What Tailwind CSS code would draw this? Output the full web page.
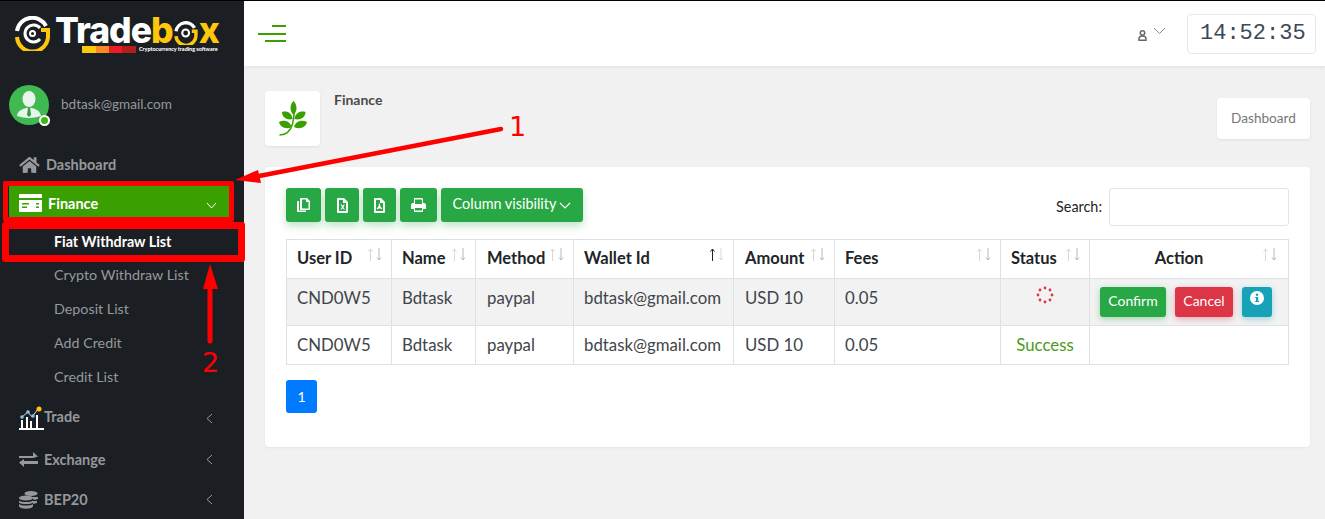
<!DOCTYPE html>
<html lang="en">
<head>
  <meta charset="UTF-8">
  <title>Tradebox - Fiat Withdraw List</title>
  <script src="https://cdn.jsdelivr.net/npm/@tailwindcss/browser@4"></script>
</head>
<body class="relative h-[519px] w-[1325px] overflow-hidden bg-[#f1f1f1] font-['Lato',sans-serif] text-[#212529]">
  <div class="flex h-[519px]">
    <!-- Sidebar -->
    <aside class="h-[519px] w-[244px] shrink-0 overflow-hidden border-t border-black bg-[#1b1f23] text-[#96989b]">
      <!-- Logo -->
      <div class="flex h-[64px] items-start pl-[15px] pt-[14px]">
        <svg class="mt-[1px] shrink-0" width="35" height="35" viewBox="0 0 35 35" fill="none">
          <path d="M2 15 A15.500 15.500 0 0 1 31 10" stroke="#fff" stroke-width="4"/>
          <path d="M2 21 A15.500 15.500 0 0 0 33 19 V14 H26" stroke="#fdc70c" stroke-width="4"/>
          <path d="M25 12 A8.500 8.500 0 1 0 25 23" stroke="#fff" stroke-width="3"/>
          <circle cx="17.500" cy="17.500" r="2.500" stroke="#fff" stroke-width="2"/>
        </svg>
        <div class="ml-[5px] flex flex-col">
          <div class="flex h-[31px] items-center font-['Inter',sans-serif] text-[35.500px] leading-[31px] font-extrabold tracking-[-1px] text-white">Trade<span class="text-[#fdc70c]">b</span><svg class="mx-[1px] mt-[5px]" width="24" height="24" viewBox="0 0 35 35" fill="none"><path d="M3 15 A14.500 14.500 0 0 1 30 10" stroke="#fff" stroke-width="5"/><path d="M3 22 A14.500 14.500 0 0 0 32 20 V15 H26" stroke="#fdc70c" stroke-width="5"/><circle cx="17" cy="17.500" r="5" stroke="#fff" stroke-width="3"/></svg><span class="text-[#fdc70c]">x</span></div>
          <div class="ml-[27px] flex items-center gap-[3px]">
            <div class="flex h-[7px] w-[54px] shrink-0">
              <span class="w-[14px] bg-[#fdc70c]"></span><span class="w-[13px] bg-[#f68b1f]"></span><span class="w-[13px] bg-[#ed1c24]"></span><span class="w-[14px] bg-[#b71c1c]"></span>
            </div>
            <span class="text-[5.400px] leading-none font-black whitespace-nowrap text-white">Cryptocurrency trading software</span>
          </div>
        </div>
      </div>
      <!-- User -->
      <div class="flex h-[82px] items-start pl-[9px] pt-[20px]">
        <div class="relative h-[40px] w-[40px] shrink-0 rounded-full bg-[#3fb950]">
          <svg width="40" height="40" viewBox="0 0 40 40">
            <ellipse cx="20" cy="14" rx="6.500" ry="8" fill="#e9f5ea"/>
            <path d="M8 31 C9 25 14 24 17 23 L23 23 C26 24 31 25 32 31 Q20 35 8 31 Z" fill="#e9f5ea"/>
            <path d="M19 23 H21 L22 30 L20 32 L18 30 Z" fill="#2e9e3e"/>
          </svg>
          <span class="absolute right-[-1px] bottom-[-1px] h-[11px] w-[11px] rounded-full border-[2.500px] border-white bg-[#3fb414]"></span>
        </div>
        <span class="ml-[12px] mt-[9px] text-[13.600px] leading-[20px]">bdtask@gmail.com</span>
      </div>
      <!-- Menu -->
      <nav class="text-[14.500px] font-bold">
        <a class="flex h-[34px] items-center pl-[19px] pt-[1px]">
          <svg width="21" height="18" viewBox="0 0 576 512" fill="#96989b"><path d="M280 148 96 300v164c0 9 7 16 16 16l112-1c9 0 16-7 16-16v-96c0-9 7-16 16-16h64c9 0 16 7 16 16v96c0 9 7 16 16 16l112 1c9 0 16-7 16-16V300L296 148c-5-4-11-4-16 0zM572 251l-84-69V44c0-7-5-12-12-12h-56c-7 0-12 5-12 12v72L318 43c-18-15-43-15-61 0L4 251c-5 4-6 12-2 17l26 31c4 5 12 6 17 2L280 107c4-4 11-4 15 0l235 194c5 4 13 3 17-2l26-31c4-5 3-13-1-17z"/></svg>
          <span class="ml-[6px]">Dashboard</span>
        </a>
        <a class="ml-[9px] mr-[15px] mt-[5px] flex h-[33px] items-center bg-[#3a9f00] pl-[10px] pr-[12px] pt-[3px] text-white">
          <svg class="mt-[-2px]" width="23" height="18" viewBox="0 0 23 18"><rect width="23" height="18" rx="1" fill="#fff"/><rect y="4" width="23" height="2" fill="#3a9f00"/><rect x="3" y="9" width="7" height="1.500" fill="#3a9f00"/><rect x="3" y="12.500" width="5" height="1.500" fill="#3a9f00"/><rect x="17" y="9" width="3" height="1.500" fill="#3a9f00"/><rect x="17" y="12.500" width="3" height="1.500" fill="#3a9f00"/></svg>
          <span class="ml-[6px]">Finance</span>
          <svg class="ml-auto mt-[2px]" width="11" height="7" viewBox="0 0 11 7" fill="none" stroke="#fff"><path d="M1 1l4.500 5L10 1"/></svg>
        </a>
        <ul class="mt-[5px] text-[14.300px] leading-[34px] font-normal">
          <li class="h-[34px] pl-[54px] pt-[1px] font-bold text-white">Fiat Withdraw List</li>
          <li class="h-[34px] pl-[54px]">Crypto Withdraw List</li>
          <li class="h-[34px] pl-[54px]">Deposit List</li>
          <li class="h-[34px] pl-[54px]">Add Credit</li>
          <li class="h-[34px] pl-[54px]">Credit List</li>
        </ul>
        <a class="mt-[2px] flex h-[42px] items-center pl-[19px] pr-[31px] pt-[3px]">
          <svg class="mb-[2px]" width="25" height="24" viewBox="0 0 25 24" fill="none">
            <path d="M3 11L9 6l4 5 6-8" stroke="#ddd" stroke-width="1"/>
            <path d="M3 22V14M8 22V11M12 22V15M18 22V9" stroke="#fff" stroke-width="2"/>
            <path d="M0 23H25" stroke="#fff" stroke-width="2"/>
            <circle cx="3" cy="11" r="1.800" fill="#7cc6f0"/><circle cx="9" cy="6" r="1.800" fill="#7cc6f0"/><circle cx="14" cy="10" r="1.800" fill="#7cc6f0"/><circle cx="20" cy="3" r="2.500" fill="#fdc70c"/>
          </svg>
          <span class="mb-[4px]">Trade</span>
          <svg class="ml-auto" width="7" height="11" viewBox="0 0 7 11" fill="none" stroke="#96989b"><path d="M6 1L1 5.500 6 10"/></svg>
        </a>
        <a class="flex h-[40px] items-center pl-[19px] pr-[31px] pt-[3px]">
          <svg width="19" height="15" viewBox="0 0 19 15" fill="#96989b"><path d="M0 4h14V0l5 4.500L14 6H0zM19 9H5V7L0 10.500 5 15v-3h14z"/></svg>
          <span class="ml-[6px]">Exchange</span>
          <svg class="ml-auto" width="7" height="11" viewBox="0 0 7 11" fill="none" stroke="#96989b"><path d="M6 1L1 5.500 6 10"/></svg>
        </a>
        <a class="flex h-[40px] items-center pl-[19px] pr-[31px] pt-[3px]">
          <svg width="19" height="18" viewBox="0 0 19 18" fill="#96989b"><ellipse cx="12" cy="2.500" rx="6.500" ry="2.500"/><path d="M13 6h6v2l-4 1zM14 10h4v2l-4 1z"/><ellipse cx="7" cy="7" rx="7" ry="2.500"/><path d="M0 9.500c2 2 12 2 14 0v2c-2 2-12 2-14 0zM0 13c2 2 12 2 14 0v2.500c-2 3-12 3-14 0z"/></svg>
          <span class="ml-[6px]">BEP20</span>
          <svg class="ml-auto" width="7" height="11" viewBox="0 0 7 11" fill="none" stroke="#96989b"><path d="M6 1L1 5.500 6 10"/></svg>
        </a>
      </nav>
    </aside>

    <!-- Main -->
    <div class="flex min-w-0 flex-1 flex-col">
      <header class="flex h-[66px] shrink-0 items-center border-t border-black bg-white pl-[14px] pr-[9px] shadow-[0_1px_4px_rgba(0,0,0,0.08)]">
        <div class="flex w-[28px] flex-col items-end gap-[5.500px]">
          <span class="h-[2px] w-[14px] bg-[#3a9f00]"></span>
          <span class="h-[2px] w-[28px] bg-[#3a9f00]"></span>
          <span class="h-[2px] w-[21px] bg-[#3a9f00]"></span>
        </div>
        <svg class="ml-auto mt-[3px]" width="9" height="11" viewBox="0 0 9 11" fill="none" stroke="#666" stroke-width="1.500"><circle cx="4.500" cy="3" r="2.200"/><path d="M1 10.300V8.500C1 7 3 6 4.500 6S8 7 8 8.500v1.800z"/></svg>
        <svg class="mb-[5px] ml-[6px]" width="13" height="8" viewBox="0 0 13 8" fill="none" stroke="#888"><path d="M1 1l5.500 5.500L12 1"/></svg>
        <div class="ml-[21px] flex h-[40px] w-[129px] items-center justify-between rounded-[4px] border border-[#e8e8e8] px-[12px] font-['Liberation_Mono',monospace] text-[22px] whitespace-nowrap text-[#3c4858]">
          <span>14</span><span>:</span><span>52</span><span>:</span><span>35</span>
        </div>
      </header>

      <main class="flex-1 pl-[21px] pr-[15px] pt-[25px]">
        <div class="flex h-[76px] items-start">
          <div class="flex h-[55px] w-[55px] items-center justify-center rounded-[4px] bg-white shadow-[0_1px_3px_rgba(0,0,0,0.08)]">
            <svg width="28" height="35" viewBox="0 0 28 35" fill="#3a9f00">
              <path d="M.5 34c6 0 11-4 13-11 1-4 1.500-7 1.500-11" fill="none" stroke="#3a9f00" stroke-width="1.500"/>
              <path d="M14.500 14C10 10 11 3 14.500 0 18 3 19 10 14.500 14z"/>
              <path d="M13.500 18C9 19.500 3 17 3 11c5-1.500 10 1 10.500 7z"/>
              <path d="M15.500 18c.5-6 6-8.500 11-7 0 6-6 8.500-11 7z"/>
              <path d="M12.500 26C7 29 1 26 0 21c5-2.500 11-1 12.500 5z"/>
              <path d="M15 26c1.500-6 8-7.500 13-5-1 5-7 8-13 5z"/>
            </svg>
          </div>
          <h1 class="ml-[14px] text-[14px] leading-[18px] font-bold text-[#4a4a4a]">Finance</h1>
          <a class="ml-auto mt-[7px] flex h-[41px] w-[93px] items-center justify-center rounded-[4px] bg-white text-[13.600px] text-[#777] shadow-[0_1px_3px_rgba(0,0,0,0.08)]">Dashboard</a>
        </div>

        <section class="h-[280px] rounded-[4px] bg-white px-[21px] pt-[21px] shadow-[0_1px_3px_rgba(0,0,0,0.05)]">
          <div class="flex h-[51px] items-start">
            <div class="flex gap-[4px]">
              <button class="flex h-[34px] w-[35px] items-center justify-center rounded-[3px] bg-[#28a745] shadow-[0_4px_8px_rgba(40,167,69,0.3)]">
                <svg width="14" height="15" viewBox="0 0 14 15" fill="#fff"><path d="M4 0h6l3 3v8a1 1 0 0 1-1 1H4a1 1 0 0 1-1-1V1a1 1 0 0 1 1-1zm1 1.500v9h6.500V4H9V1.500z"/><path d="M1 3h1v9.500h7V14H1a1 1 0 0 1-1-1V4a1 1 0 0 1 1-1z"/></svg>
              </button>
              <button class="flex h-[34px] w-[34px] items-center justify-center rounded-[3px] bg-[#28a745] shadow-[0_4px_8px_rgba(40,167,69,0.3)]">
                <svg width="11" height="15" viewBox="0 0 11 15" fill="#fff"><path fill-rule="evenodd" d="M1 0h6l4 4v10a1 1 0 0 1-1 1H1a1 1 0 0 1-1-1V1a1 1 0 0 1 1-1zm1 2v11h7V5H6V2z"/><path d="M3.500 6.500h1.200l1 1.500 1-1.500h1.200L6.400 9l1.500 2.500H6.700l-1-1.500-1 1.500H3.500L5 9z"/></svg>
              </button>
              <button class="flex h-[34px] w-[33px] items-center justify-center rounded-[3px] bg-[#28a745] shadow-[0_4px_8px_rgba(40,167,69,0.3)]">
                <svg width="11" height="15" viewBox="0 0 11 15" fill="#fff"><path fill-rule="evenodd" d="M1 0h6l4 4v10a1 1 0 0 1-1 1H1a1 1 0 0 1-1-1V1a1 1 0 0 1 1-1zm1 2v11h7V5H6V2z"/><path d="M5 5.500h1l.300 3 2 2-.500.700-2.300-1-2.300 1.300-.500-.700L4.600 8z"/></svg>
              </button>
              <button class="flex h-[34px] w-[37px] items-center justify-center rounded-[3px] bg-[#28a745] shadow-[0_4px_8px_rgba(40,167,69,0.3)]">
                <svg width="15" height="14" viewBox="0 0 15 14" fill="#fff"><path fill-rule="evenodd" d="M3 0h8l1 1v4h1a2 2 0 0 1 2 2v4h-3v3H3v-3H0V7a2 2 0 0 1 2-2h1zm1 1.500V6h7V1.500zM4 10v2.500h7V10z"/></svg>
              </button>
              <button class="flex h-[34px] w-[142px] items-center justify-center gap-[3px] rounded-[3px] bg-[#28a745] pb-[3px] text-[14.400px] text-white shadow-[0_4px_8px_rgba(40,167,69,0.3)]">
                Column visibility
                <svg class="mt-[3px]" width="12" height="7" viewBox="0 0 12 7" fill="none" stroke="#fff" stroke-width="1.200"><path d="M1 1l5 5 5-5"/></svg>
              </button>
            </div>
            <label class="ml-auto flex items-center gap-[7px] pb-[2px] text-[14.400px]">
              Search:
              <input class="h-[38px] w-[180px] rounded-[3px] border border-[#e4e4e4] bg-white" type="text">
            </label>
          </div>

          <table class="w-[1003px] table-fixed border-collapse border border-[#dee2e6] text-[16.800px] text-[#3f454b]">
            <thead>
              <tr class="h-[39px] text-left text-[16.500px]">
                <th class="relative w-[105px] border border-[#dee2e6] pl-[10px] pb-[2px] font-bold text-[#212529]">User ID<svg class="absolute right-[9px] top-[8px]" width="14" height="13" viewBox="0 0 14 13" fill="none"><path d="M2.500 13V1M.5 3.500l2-2.500 2 2.500" stroke="#d8d8d8"/><path d="M11 0v12M9 9.500l2 2.500 2-2.500" stroke="#b8b8b8"/></svg></th>
                <th class="relative w-[84px] border border-[#dee2e6] pl-[10px] pb-[2px] font-bold text-[#212529]">Name<svg class="absolute right-[9px] top-[8px]" width="14" height="13" viewBox="0 0 14 13" fill="none"><path d="M2.500 13V1M.5 3.500l2-2.500 2 2.500" stroke="#d8d8d8"/><path d="M11 0v12M9 9.500l2 2.500 2-2.500" stroke="#b8b8b8"/></svg></th>
                <th class="relative w-[98px] border border-[#dee2e6] pl-[11px] pb-[2px] font-bold text-[#212529]">Method<svg class="absolute right-[9px] top-[8px]" width="14" height="13" viewBox="0 0 14 13" fill="none"><path d="M2.500 13V1M.5 3.500l2-2.500 2 2.500" stroke="#d8d8d8"/><path d="M11 0v12M9 9.500l2 2.500 2-2.500" stroke="#b8b8b8"/></svg></th>
                <th class="relative w-[160px] border border-[#dee2e6] pl-[10px] pb-[2px] font-bold text-[#212529]">Wallet Id<svg class="absolute right-[9px] top-[8px]" width="14" height="13" viewBox="0 0 14 13" fill="none"><path d="M2.500 13V1M.5 3.500l2-2.500 2 2.500" stroke="#222"/><path d="M11 0v12M9 9.500l2 2.500 2-2.500" stroke="#d8d8d8"/></svg></th>
                <th class="relative w-[101px] border border-[#dee2e6] pl-[11px] pb-[2px] font-bold text-[#212529]">Amount<svg class="absolute right-[9px] top-[8px]" width="14" height="13" viewBox="0 0 14 13" fill="none"><path d="M2.500 13V1M.5 3.500l2-2.500 2 2.500" stroke="#d8d8d8"/><path d="M11 0v12M9 9.500l2 2.500 2-2.500" stroke="#b8b8b8"/></svg></th>
                <th class="relative w-[166px] border border-[#dee2e6] pl-[10px] pb-[2px] font-bold text-[#212529]">Fees<svg class="absolute right-[9px] top-[8px]" width="14" height="13" viewBox="0 0 14 13" fill="none"><path d="M2.500 13V1M.5 3.500l2-2.500 2 2.500" stroke="#d8d8d8"/><path d="M11 0v12M9 9.500l2 2.500 2-2.500" stroke="#b8b8b8"/></svg></th>
                <th class="relative w-[89px] border border-[#dee2e6] pl-[10px] pb-[2px] font-bold text-[#212529]">Status<svg class="absolute right-[9px] top-[8px]" width="14" height="13" viewBox="0 0 14 13" fill="none"><path d="M2.500 13V1M.5 3.500l2-2.500 2 2.500" stroke="#d8d8d8"/><path d="M11 0v12M9 9.500l2 2.500 2-2.500" stroke="#b8b8b8"/></svg></th>
                <th class="relative border border-[#dee2e6] pb-[2px] pr-[20px] text-center font-bold text-[#212529]">Action<svg class="absolute right-[11px] top-[8px]" width="14" height="13" viewBox="0 0 14 13" fill="none"><path d="M2.500 13V1M.5 3.500l2-2.500 2 2.500" stroke="#d8d8d8"/><path d="M11 0v12M9 9.500l2 2.500 2-2.500" stroke="#b8b8b8"/></svg></th>
              </tr>
            </thead>
            <tbody>
              <tr class="h-[47px] bg-[#f2f2f2]">
                <td class="border border-[#dee2e6] pl-[10px] pb-[8px]">CND0W5</td>
                <td class="border border-[#dee2e6] pl-[10px] pb-[8px]">Bdtask</td>
                <td class="border border-[#dee2e6] pl-[11px] pb-[8px]">paypal</td>
                <td class="border border-[#dee2e6] pl-[10px] pb-[8px]">bdtask@gmail.com</td>
                <td class="border border-[#dee2e6] pl-[11px] pb-[8px]">USD 10</td>
                <td class="border border-[#dee2e6] pl-[10px] pb-[8px]">0.05</td>
                <td class="border border-[#dee2e6] pb-[15px]">
                  <svg class="mx-auto" width="18" height="18" viewBox="0 0 18 18" fill="#dc3545"><circle cx="9" cy="2" r="1.400"/><circle cx="14" cy="4" r="1.400"/><circle cx="16" cy="9" r="1.400"/><circle cx="14" cy="14" r="1.400"/><circle cx="9" cy="16" r="1.400"/><circle cx="4" cy="14" r="1.400"/><circle cx="2" cy="9" r="1.400"/><circle cx="4" cy="4" r="1.400"/></svg>
                </td>
                <td class="border border-[#dee2e6] pl-[10px]">
                  <div class="flex gap-[9px] pb-[1px]">
                    <button class="h-[30px] w-[66px] rounded-[3px] bg-[#28a745] pb-[2px] text-[14px] text-white shadow-[0_2px_6px_rgba(40,167,69,0.4)]">Confirm</button>
                    <button class="h-[30px] w-[58px] rounded-[3px] bg-[#dc3545] pb-[2px] text-[14px] text-white shadow-[0_2px_6px_rgba(220,53,69,0.4)]">Cancel</button>
                    <button class="flex h-[30px] w-[30px] justify-center rounded-[3px] bg-[#17a2b8] pt-[4px] shadow-[0_2px_6px_rgba(23,162,184,0.4)]">
                      <svg width="14" height="14" viewBox="0 0 14 14"><circle cx="7" cy="7" r="7" fill="#fff"/><rect x="6" y="6" width="2.200" height="4.500" fill="#17a2b8"/><rect x="5.200" y="6" width="2" height="1" fill="#17a2b8"/><rect x="5.200" y="10" width="3.800" height="1" fill="#17a2b8"/><circle cx="7" cy="3.800" r="1.200" fill="#17a2b8"/></svg>
                    </button>
                  </div>
                </td>
              </tr>
              <tr class="h-[39px]">
                <td class="border border-[#dee2e6] pl-[10px]">CND0W5</td>
                <td class="border border-[#dee2e6] pl-[10px]">Bdtask</td>
                <td class="border border-[#dee2e6] pl-[11px]">paypal</td>
                <td class="border border-[#dee2e6] pl-[10px]">bdtask@gmail.com</td>
                <td class="border border-[#dee2e6] pl-[11px]">USD 10</td>
                <td class="border border-[#dee2e6] pl-[10px]">0.05</td>
                <td class="border border-[#dee2e6] text-center text-[#4a9a1a]">Success</td>
                <td class="border border-[#dee2e6]"></td>
              </tr>
            </tbody>
          </table>

          <div class="mt-[15px] flex h-[33px] w-[31px] items-center justify-center rounded-[3px] bg-[#007bff] text-[14px] text-white">1</div>
        </section>
      </main>
    </div>
  </div>

  <!-- Red annotations drawn over the screenshot -->
  <div class="absolute left-[3px] top-[181px] h-[41px] w-[231px] rounded-[2px] border-[5px] border-[#ff0000]"></div>
  <div class="absolute left-[2px] top-[222px] h-[40px] w-[243px] rounded-[3px] border-[7px] border-[#ff0000]"></div>
  <svg class="absolute left-0 top-0" width="1325" height="519" fill="#ff0000">
    <path d="M501 129L259 176" stroke="#ff0000" stroke-width="4.500" stroke-linecap="round"/>
    <path d="M235 180L258 170 261 183z"/>
    <path d="M210 341V287" stroke="#ff0000" stroke-width="5" stroke-linecap="round"/>
    <path d="M210 264L218 289H203z"/>
  </svg>
  <span class="absolute left-[509px] top-[109px] font-['DejaVu_Sans',sans-serif] text-[27px] leading-[36px] text-[#ff0000]">1</span>
  <span class="absolute left-[202px] top-[345px] font-['DejaVu_Sans',sans-serif] text-[27px] leading-[36px] text-[#ff0000]">2</span>
</body>
</html>
